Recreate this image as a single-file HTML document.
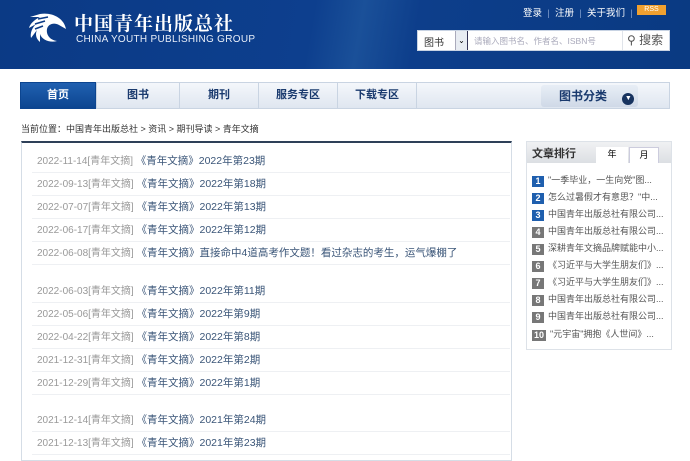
<!DOCTYPE html>
<html><head><meta charset="utf-8"><style>
*{margin:0;padding:0;box-sizing:border-box}
body{width:690px;height:455px;overflow:hidden;background:#fff;font-family:"Liberation Sans","Noto Sans CJK SC",sans-serif;position:relative}
.a{position:absolute;white-space:nowrap}
#hdr{left:0;top:0;width:690px;height:69px;background:linear-gradient(100deg,#0b3a85 0%,#0d3f8e 45%,#1a5099 52%,#0d3e8b 60%,#0a3a82 100%)}
.nav{top:82px;height:27px;background:linear-gradient(#f4f7fb,#dfe6f0);border:1px solid #c9d4e2;font-size:11px;font-weight:bold;color:#1a3a6e;text-align:center;line-height:25px}
.row{left:32px;width:478px;height:23px;border-bottom:1px solid #eef0f3;font-size:10px;line-height:22px;padding-left:5px}
.row .d{color:#999}.row .t{color:#3a5578;font-size:10.5px}
.r{left:532px;font-size:9px;color:#555;line-height:14px}
.r b{display:inline-block;width:12px;height:11px;color:#fff;font-size:9px;text-align:center;line-height:11px;margin-right:4px;vertical-align:-1px}
</style></head><body>
<div class="a" id="hdr"></div>
<svg class="a" style="left:26px;top:12px" width="42" height="32" viewBox="0 0 42 32">
<path d="M40 17 C38 6 26 0 14 2 L4 5 L14 5 C8 8 4 12 3 16 L10 12 C6 16 4 21 5 26 L11 18 C9 22 10 27 14 30 L14 22 C16 28 24 31 31 29 C24 28 20 23 21 17 C22 12 28 10 33 13 Z" fill="#fff"/>
<path d="M12 7 L22 5 M9 12 L19 9 M9 17 L17 14" stroke="#0b3a85" stroke-width="1.6"/>
</svg>
<div class="a" style="left:74px;top:9px;font-size:19px;color:#fff;font-family:'Noto Serif CJK SC',serif;letter-spacing:1px;font-weight:bold">中国青年出版总社</div>
<div class="a" style="left:76px;top:34px;font-size:10px;color:#e8eef8;letter-spacing:.3px">CHINA YOUTH PUBLISHING GROUP</div>
<div class="a" style="left:523px;top:5px;font-size:9.5px;color:#fff">登录 &nbsp;<span style="color:#7f9ccc">|</span>&nbsp; 注册 &nbsp;<span style="color:#7f9ccc">|</span>&nbsp; 关于我们 &nbsp;<span style="color:#7f9ccc">|</span></div>
<div class="a" style="left:637px;top:5px;width:29px;height:10px;background:#f0a030;font-size:7px;color:#fff;line-height:10px;text-align:center">RSS</div>
<div class="a" style="left:417px;top:30px;width:253px;height:21px;background:#fff;border:1px solid #c8d3e3"></div>
<div class="a" style="left:424px;top:34px;font-size:10px;color:#333">图书</div>
<div class="a" style="left:455px;top:31px;width:13px;height:19px;background:#e8ecf2;border-left:1px solid #aab;border-right:1px solid #335;font-size:8px;text-align:center;line-height:19px">⌄</div>
<div class="a" style="left:474px;top:35px;font-size:8.5px;color:#aab">请输入图书名、作者名、ISBN号</div>
<div class="a" style="left:622px;top:31px;height:19px;border-left:1px solid #e0e4ea;padding-left:4px;font-size:12px;color:#555;line-height:18px">⚲ 搜索</div>
<div class="a nav" style="left:20px;width:76px;background:linear-gradient(#2060b0,#0c4590);color:#fff;border-color:#0c4590">首页</div>
<div class="a nav" style="left:96px;width:84px">图书</div>
<div class="a nav" style="left:179px;width:80px">期刊</div>
<div class="a nav" style="left:258px;width:80px">服务专区</div>
<div class="a nav" style="left:337px;width:80px">下载专区</div>
<div class="a nav" style="left:416px;width:254px"></div>
<div class="a" style="left:541px;top:85px;width:97px;height:22px;background:linear-gradient(#e8eef6,#cfd9e7);border-radius:3px;font-size:12px;color:#1a3a6e;font-weight:bold;line-height:22px;padding-left:18px">图书分类 <span style="display:inline-block;width:12px;height:12px;border-radius:6px;background:#17335f;color:#fff;font-size:7px;line-height:12px;text-align:center;margin-left:12px;vertical-align:0">▼</span></div>
<div class="a" style="left:21px;top:122px;font-size:9px;color:#333">当前位置：中国青年出版总社 &gt; 资讯 &gt; 期刊导读 &gt; 青年文摘</div>
<div class="a" style="left:21px;top:141px;width:491px;height:320px;border:1px solid #d5dde6;border-top:2px solid #2e4058"></div>
<div class="a row" style="top:150px"><span class="d">2022-11-14[青年文摘]</span> <span class="t">《青年文摘》2022年第23期</span></div>
<div class="a row" style="top:173px"><span class="d">2022-09-13[青年文摘]</span> <span class="t">《青年文摘》2022年第18期</span></div>
<div class="a row" style="top:196px"><span class="d">2022-07-07[青年文摘]</span> <span class="t">《青年文摘》2022年第13期</span></div>
<div class="a row" style="top:219px"><span class="d">2022-06-17[青年文摘]</span> <span class="t">《青年文摘》2022年第12期</span></div>
<div class="a row" style="top:242px"><span class="d">2022-06-08[青年文摘]</span> <span class="t">《青年文摘》直接命中4道高考作文题！看过杂志的考生，运气爆棚了</span></div>
<div class="a row" style="top:280px"><span class="d">2022-06-03[青年文摘]</span> <span class="t">《青年文摘》2022年第11期</span></div>
<div class="a row" style="top:303px"><span class="d">2022-05-06[青年文摘]</span> <span class="t">《青年文摘》2022年第9期</span></div>
<div class="a row" style="top:326px"><span class="d">2022-04-22[青年文摘]</span> <span class="t">《青年文摘》2022年第8期</span></div>
<div class="a row" style="top:349px"><span class="d">2021-12-31[青年文摘]</span> <span class="t">《青年文摘》2022年第2期</span></div>
<div class="a row" style="top:372px"><span class="d">2021-12-29[青年文摘]</span> <span class="t">《青年文摘》2022年第1期</span></div>
<div class="a row" style="top:409px"><span class="d">2021-12-14[青年文摘]</span> <span class="t">《青年文摘》2021年第24期</span></div>
<div class="a row" style="top:432px"><span class="d">2021-12-13[青年文摘]</span> <span class="t">《青年文摘》2021年第23期</span></div>
<div class="a" style="left:526px;top:141px;width:146px;height:209px;border:1px solid #dde2e8"></div>
<div class="a" style="left:527px;top:142px;width:144px;height:21px;background:linear-gradient(#f0f1f3,#dcdfe3)"></div>
<div class="a" style="left:532px;top:145px;font-size:11px;font-weight:bold;color:#333">文章排行</div>
<div class="a" style="left:596px;top:147px;width:32px;height:16px;background:#fff;font-size:9px;text-align:center;line-height:15px">年</div>
<div class="a" style="left:629px;top:147px;width:30px;height:16px;background:#fff;border:1px solid #ccd;border-bottom:none;font-size:9px;text-align:center;line-height:15px">月</div>
<div class="a r" style="top:173px"><b style="background:#1f5fae">1</b>"一季毕业，一生向党"图...</div>
<div class="a r" style="top:190px"><b style="background:#1f5fae">2</b>怎么过暑假才有意思？"中...</div>
<div class="a r" style="top:207px"><b style="background:#1f5fae">3</b>中国青年出版总社有限公司...</div>
<div class="a r" style="top:224px"><b style="background:#777">4</b>中国青年出版总社有限公司...</div>
<div class="a r" style="top:241px"><b style="background:#777">5</b>深耕青年文摘品牌赋能中小...</div>
<div class="a r" style="top:258px"><b style="background:#777">6</b>《习近平与大学生朋友们》...</div>
<div class="a r" style="top:275px"><b style="background:#777">7</b>《习近平与大学生朋友们》...</div>
<div class="a r" style="top:292px"><b style="background:#777">8</b>中国青年出版总社有限公司...</div>
<div class="a r" style="top:309px"><b style="background:#777">9</b>中国青年出版总社有限公司...</div>
<div class="a r" style="top:327px"><b style="background:#777;width:14px">10</b>"元宇宙"拥抱《人世间》...</div>
</body></html>
